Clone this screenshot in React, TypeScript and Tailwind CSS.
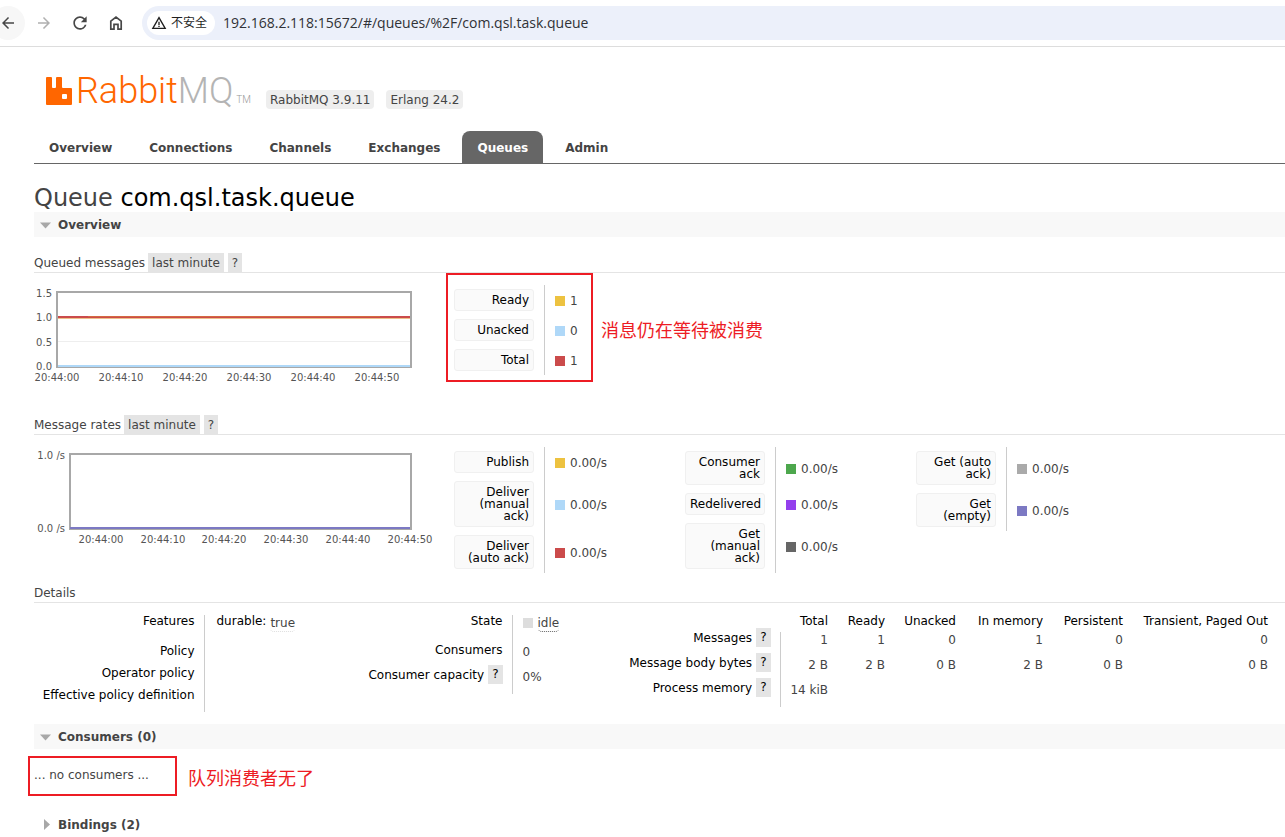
import type { ReactNode } from "react";
import { MdArrowBack, MdArrowForward, MdRefresh, MdWarningAmber } from "react-icons/md";

type Rate = { label: string; value: string; color: string };

const tabs = ["Overview", "Connections", "Channels", "Exchanges", "Queues", "Admin"];

const queued: Rate[] = [
  { label: "Ready", value: "1", color: "bg-[#edc240]" },
  { label: "Unacked", value: "0", color: "bg-[#afd8f8]" },
  { label: "Total", value: "1", color: "bg-[#cb4b4b]" },
];

const rates: Rate[][] = [
  [
    { label: "Publish", value: "0.00/s", color: "bg-[#edc240]" },
    { label: "Deliver (manual ack)", value: "0.00/s", color: "bg-[#afd8f8]" },
    { label: "Deliver (auto ack)", value: "0.00/s", color: "bg-[#cb4b4b]" },
  ],
  [
    { label: "Consumer ack", value: "0.00/s", color: "bg-[#4da74d]" },
    { label: "Redelivered", value: "0.00/s", color: "bg-[#9440ed]" },
    { label: "Get (manual ack)", value: "0.00/s", color: "bg-[#666666]" },
  ],
  [
    { label: "Get (auto ack)", value: "0.00/s", color: "bg-[#aaaaaa]" },
    { label: "Get (empty)", value: "0.00/s", color: "bg-[#7c79c3]" },
  ],
];

const messageColumns = [
  { name: "Total", count: "1", bytes: "2 B", memory: "14 kiB", width: "w-[58px]" },
  { name: "Ready", count: "1", bytes: "2 B", memory: "", width: "w-[57px]" },
  { name: "Unacked", count: "0", bytes: "0 B", memory: "", width: "w-[71px]" },
  { name: "In memory", count: "1", bytes: "2 B", memory: "", width: "w-[87px]" },
  { name: "Persistent", count: "0", bytes: "0 B", memory: "", width: "w-[80px]" },
  { name: "Transient, Paged Out", count: "0", bytes: "0 B", memory: "", width: "w-[145px]" },
];

const times = ["20:44:00", "20:44:10", "20:44:20", "20:44:30", "20:44:40", "20:44:50"];

const BrowserBar = () => {
  return (
    <div className="flex h-[47px] items-center overflow-hidden border-b border-[#dddddd] bg-white">
      <div className="-ml-[9px] flex gap-0.5 text-[#474747]">
        <button aria-label="Back" className="flex size-[34px] items-center justify-center rounded-full bg-[#f7f7f7]">
          <MdArrowBack size={18} />
        </button>
        <button aria-label="Forward" className="flex size-[34px] items-center justify-center text-[#b0b0b0]">
          <MdArrowForward size={18} />
        </button>
        <button aria-label="Reload" className="flex size-[34px] items-center justify-center">
          <MdRefresh size={20} />
        </button>
        <button aria-label="Home" className="flex size-[34px] items-center justify-center">
          <svg width="14" height="16" viewBox="0 0 14 16" fill="none" stroke="currentColor" strokeWidth="1.7">
            <path d="M1.8 6.1 7 2l5.2 4.1v8.1H9V9.3H5v4.9H1.8z" />
          </svg>
        </button>
      </div>
      <div className="ml-[9px] flex h-[34px] flex-1 items-center rounded-l-full bg-[#ecf0fa] pl-[5px]">
        <button className="flex h-6 items-center gap-1 rounded-full bg-white pr-2 pl-1 text-[12px] text-[#1f1f1f]">
          <MdWarningAmber size={16} />
          <span className="font-['Noto_Sans','Noto_Sans_CJK_SC',sans-serif]">不安全</span>
        </button>
        <input
          aria-label="Address"
          readOnly
          className="ml-2 flex-1 bg-transparent font-['Open_Sans',sans-serif] text-[14px] text-[#303236] outline-none"
          value="192.168.2.118:15672/#/queues/%2F/com.qsl.task.queue"
        />
      </div>
    </div>
  );
};

const Logo = () => {
  return (
    <a href="#/" aria-label="RabbitMQ" className="flex items-end font-['Roboto',sans-serif]">
      <svg width="26" height="28" viewBox="0 0 26 28" className="mb-1" fill="#ff6600">
        <path
          fillRule="evenodd"
          d="M1 0h4q1 0 1 1v9q0 1 1 1h2q1 0 1-1V1q0-1 1-1h4q1 0 1 1v9q0 1 1 1H25q1 0 1 1v15q0 1-1 1H1q-1 0-1-1V1q0-1 1-1zM17 17q-1 0-1 1v3q0 1 1 1h3q1 0 1-1v-3q0-1-1-1z"
        />
      </svg>
      <span className="ml-1 text-[36px] leading-9 font-light text-[#ff6600]">Rabbit</span>
      <span className="text-[36px] leading-9 font-light text-[#b4b4b4]">MQ</span>
      <span className="ml-[3px] text-[10px] leading-[18px] font-light text-[#999999]">TM</span>
    </a>
  );
};

const Help = () => <button className="bg-[#e4e4e4] px-1 py-[3px] leading-[13px]">?</button>;

const SectionTitle = ({ title, open, className }: { title: string; open?: boolean; className?: string }) => {
  return (
    <h2 className={className}>
      <button className="flex h-[25px] w-full items-center font-bold">
        <svg width="24" height="12" viewBox="0 0 24 12" fill="#a8a8a8">
          {open ? <path d="M6 3.500h11l-5.500 6z" /> : <path d="M10 0v11l6-5.500z" />}
        </svg>
        {title}
      </button>
    </h2>
  );
};

const SubTitle = ({ title, tagged }: { title: string; tagged?: boolean }) => {
  return (
    <div className="flex h-5 items-center gap-[3px] border-b border-[#e4e4e4]">
      <h3>{title}</h3>
      {tagged && (
        <>
          <button className="bg-[#e4e4e4] px-1 pt-1 pb-0.5 leading-[13px]">last minute</button>
          <button className="ml-px bg-[#e4e4e4] px-1 pt-1 pb-0.5 leading-[13px]">?</button>
        </>
      )}
    </div>
  );
};

const RateTable = ({ rows }: { rows: Rate[] }) => {
  return (
    <table className="border-collapse self-start">
      <tbody>
        {rows.map((row) => (
          <tr key={row.label}>
            <th className="border-r border-[#cccccc] py-1 pr-[10px] pl-[10px] font-normal">
              <div className="w-20 rounded-[3px] border border-[#f0f0f0] bg-[#fafafa] px-1 py-1 text-right leading-3 text-black">
                {row.label}
              </div>
            </th>
            <td className="px-[10px] pt-0.5">
              <div className="flex items-center gap-[5px] leading-3">
                <span className={`size-[10px] ${row.color}`} />
                {row.value}
              </div>
            </td>
          </tr>
        ))}
      </tbody>
    </table>
  );
};

const ChartText = ({ x, y, anchor, children }: { x: number; y: number; anchor: "end" | "middle"; children: ReactNode }) => (
  <text x={x} y={y} textAnchor={anchor} fontSize="10" fill="#545454">
    {children}
  </text>
);

const QueuedChart = () => {
  return (
    <svg width="410" height="120" className="shrink-0">
      <path d="M24 56.500H376" stroke="#eeeeee" />
      <path d="M24 33H376" stroke="#edc08a" strokeWidth="2" />
      <path d="M24 32H376" stroke="#cb4b4b" strokeWidth="2" />
      <path d="M54 31.500H346" stroke="#d4683f" />
      <rect x="23" y="7" width="354" height="75" fill="none" stroke="#a8a8a8" strokeWidth="2" />
      <path d="M24 81H376" stroke="#afd8f8" strokeWidth="2" />
      {["1.5", "1.0", "0.5", "0.0"].map((label, i) => (
        <ChartText key={label} x={18} y={12 + Math.round(i * 24.4)} anchor="end">{label}</ChartText>
      ))}
      {times.map((time, i) => (
        <ChartText key={time} x={23 + i * 64} y={96} anchor="middle">{time}</ChartText>
      ))}
    </svg>
  );
};

const RatesChart = () => {
  return (
    <svg width="410" height="120" className="shrink-0">
      <rect x="36" y="7" width="341" height="75" fill="none" stroke="#a8a8a8" strokeWidth="2" />
      <path d="M36 81H376" stroke="#7c79c3" strokeWidth="2" />
      <ChartText x={31} y={12} anchor="end">1.0 /s</ChartText>
      <ChartText x={31} y={85} anchor="end">0.0 /s</ChartText>
      {times.map((time, i) => (
        <ChartText key={time} x={67 + Math.round(i * 61.7)} y={96} anchor="middle">{time}</ChartText>
      ))}
    </svg>
  );
};

const headCell = "pr-[9px] text-right align-top font-normal whitespace-nowrap text-black";

const Details = () => {
  return (
    <div className="flex items-start pt-3 leading-3">
      <table className="w-[308px] shrink-0 border-collapse">
        <tbody>
          <tr className="h-[30px]">
            <th className={`w-[170px] border-r border-[#cccccc] ${headCell}`}>Features</th>
            <td className="pl-3 align-top">
              <div className="flex gap-1">
                <span className="text-black">durable:</span>
                <abbr className="rounded-b border-b border-dotted border-[#dddddd] pt-0.5 pb-0.5">true</abbr>
              </div>
            </td>
          </tr>
          <tr className="h-[22px]">
            <th className={`border-r border-[#cccccc] ${headCell}`}>Policy</th>
            <td />
          </tr>
          <tr className="h-[22px]">
            <th className={`border-r border-[#cccccc] ${headCell}`}>Operator policy</th>
            <td />
          </tr>
          <tr className="h-[23px]">
            <th className={`border-r border-[#cccccc] ${headCell}`}>Effective policy definition</th>
            <td />
          </tr>
        </tbody>
      </table>
      <table className="w-[257px] shrink-0 border-collapse">
        <tbody>
          <tr className="h-[29px]">
            <th className={`w-[170px] border-r border-[#cccccc] ${headCell}`}>State</th>
            <td className="pt-0.5 pl-[10px] align-top">
              <div className="flex items-center gap-[5px]">
                <span className="size-[10px] bg-[#dddddd]" />
                <abbr className="-mb-[3px] rounded-b border-b border-dotted border-[#666666] pb-0.5">idle</abbr>
              </div>
            </td>
          </tr>
          <tr className="h-[25px]">
            <th className={`border-r border-[#cccccc] ${headCell}`}>Consumers</th>
            <td className="pt-0.5 pl-[10px] align-top">0</td>
          </tr>
          <tr className="h-[25px]">
            <th className={`border-r border-[#cccccc] ${headCell}`}>
              <span className="-my-1 flex items-center justify-end gap-1">
                Consumer capacity <Help />
              </span>
            </th>
            <td className="pt-0.5 pl-[10px] align-top">0%</td>
          </tr>
        </tbody>
      </table>
      <table className="w-[679px] table-fixed border-collapse">
        <thead>
          <tr className="h-[17px] text-black">
            <td className="w-[181px]" />
            {messageColumns.map((col) => (
              <th
                key={col.name}
                className={`pr-[10px] text-right align-top font-normal whitespace-nowrap ${col.width}`}
              >
                {col.name}
              </th>
            ))}
          </tr>
        </thead>
        <tbody>
          {(
            [
              ["Messages", "count"],
              ["Message body bytes", "bytes"],
              ["Process memory", "memory"],
            ] as const
          ).map(([label, key]) => (
            <tr key={label} className="h-[25px]">
              <th className={`border-r border-[#cccccc] ${headCell}`}>
                <span className="-my-1 flex items-center justify-end gap-1">
                  {label} <Help />
                </span>
              </th>
              {messageColumns.map((col) => (
                <td key={col.name} className="pt-0.5 pr-[10px] text-right align-top whitespace-nowrap">
                  {col[key]}
                </td>
              ))}
            </tr>
          ))}
        </tbody>
      </table>
    </div>
  );
};

const Note = ({ className, children }: { className: string; children: string }) => (
  <span
    className={`absolute font-['Noto_Sans_CJK_SC',sans-serif] text-[18px] leading-6 whitespace-nowrap text-[#ed1c24] ${className}`}
  >
    {children}
  </span>
);

const App = () => {
  return (
    <div className="overflow-hidden bg-white font-['DejaVu_Sans',Verdana,sans-serif] text-[12px] leading-4 text-[#444444]">
      <BrowserBar />
      <div className="pl-[34px]">
        <header className="flex h-[62px] items-end gap-3 pl-3">
          <div className="w-[208px]">
            <Logo />
          </div>
          <span className="rounded bg-[#eeeeee] px-1 pt-0.5 leading-[17px]">RabbitMQ 3.9.11</span>
          <span className="rounded bg-[#eeeeee] px-1 pt-0.5 leading-[17px]">Erlang 24.2</span>
        </header>
        <nav className="mt-[22px] flex gap-[7px] border-b border-[#666666]">
          {tabs.map((tab) => (
            <a
              key={tab}
              href={`#/${tab.toLowerCase()}`}
              className={`rounded-t-lg px-[15px] pt-[9px] pb-[7px] font-bold ${tab === "Queues" ? "bg-[#666666] text-white" : ""}`}
            >
              {tab}
            </a>
          ))}
        </nav>

        <h1 className="pt-[21px] text-[24px] leading-[27px]">
          Queue <b className="font-normal text-black">com.qsl.task.queue</b>
        </h1>
        <SectionTitle title="Overview" open className="bg-[#f8f8f8]" />

        <section className="pt-4">
          <SubTitle title="Queued messages" tagged />
          <div className="flex pt-3 pb-[10px]">
            <QueuedChart />
            <div className="relative">
              <RateTable rows={queued} />
              <div className="absolute -top-3 left-0.5 h-[109px] w-[147px] border-2 border-[#ed1c24]" />
              <Note className="top-8 left-[157px]">消息仍在等待被消费</Note>
            </div>
          </div>
        </section>

        <section>
          <SubTitle title="Message rates" tagged />
          <div className="flex pt-3 pb-[10px]">
            <RatesChart />
            {rates.map((rows) => (
              <div key={rows[0].label} className="w-[231px] shrink-0">
                <RateTable rows={rows} />
              </div>
            ))}
          </div>
        </section>

        <section className="pb-3">
          <SubTitle title="Details" />
          <Details />
        </section>

        <SectionTitle title="Consumers (0)" open className="bg-[#f8f8f8]" />
        <div className="relative pt-[18px] pb-[29px]">
          <p>... no consumers ...</p>
          <div className="absolute top-[7px] -left-1.5 h-10 w-[149px] border-2 border-[#ed1c24]" />
          <Note className="top-4 left-[154px]">队列消费者无了</Note>
        </div>
        <SectionTitle title="Bindings (2)" />
      </div>
    </div>
  );
};

export default App;
